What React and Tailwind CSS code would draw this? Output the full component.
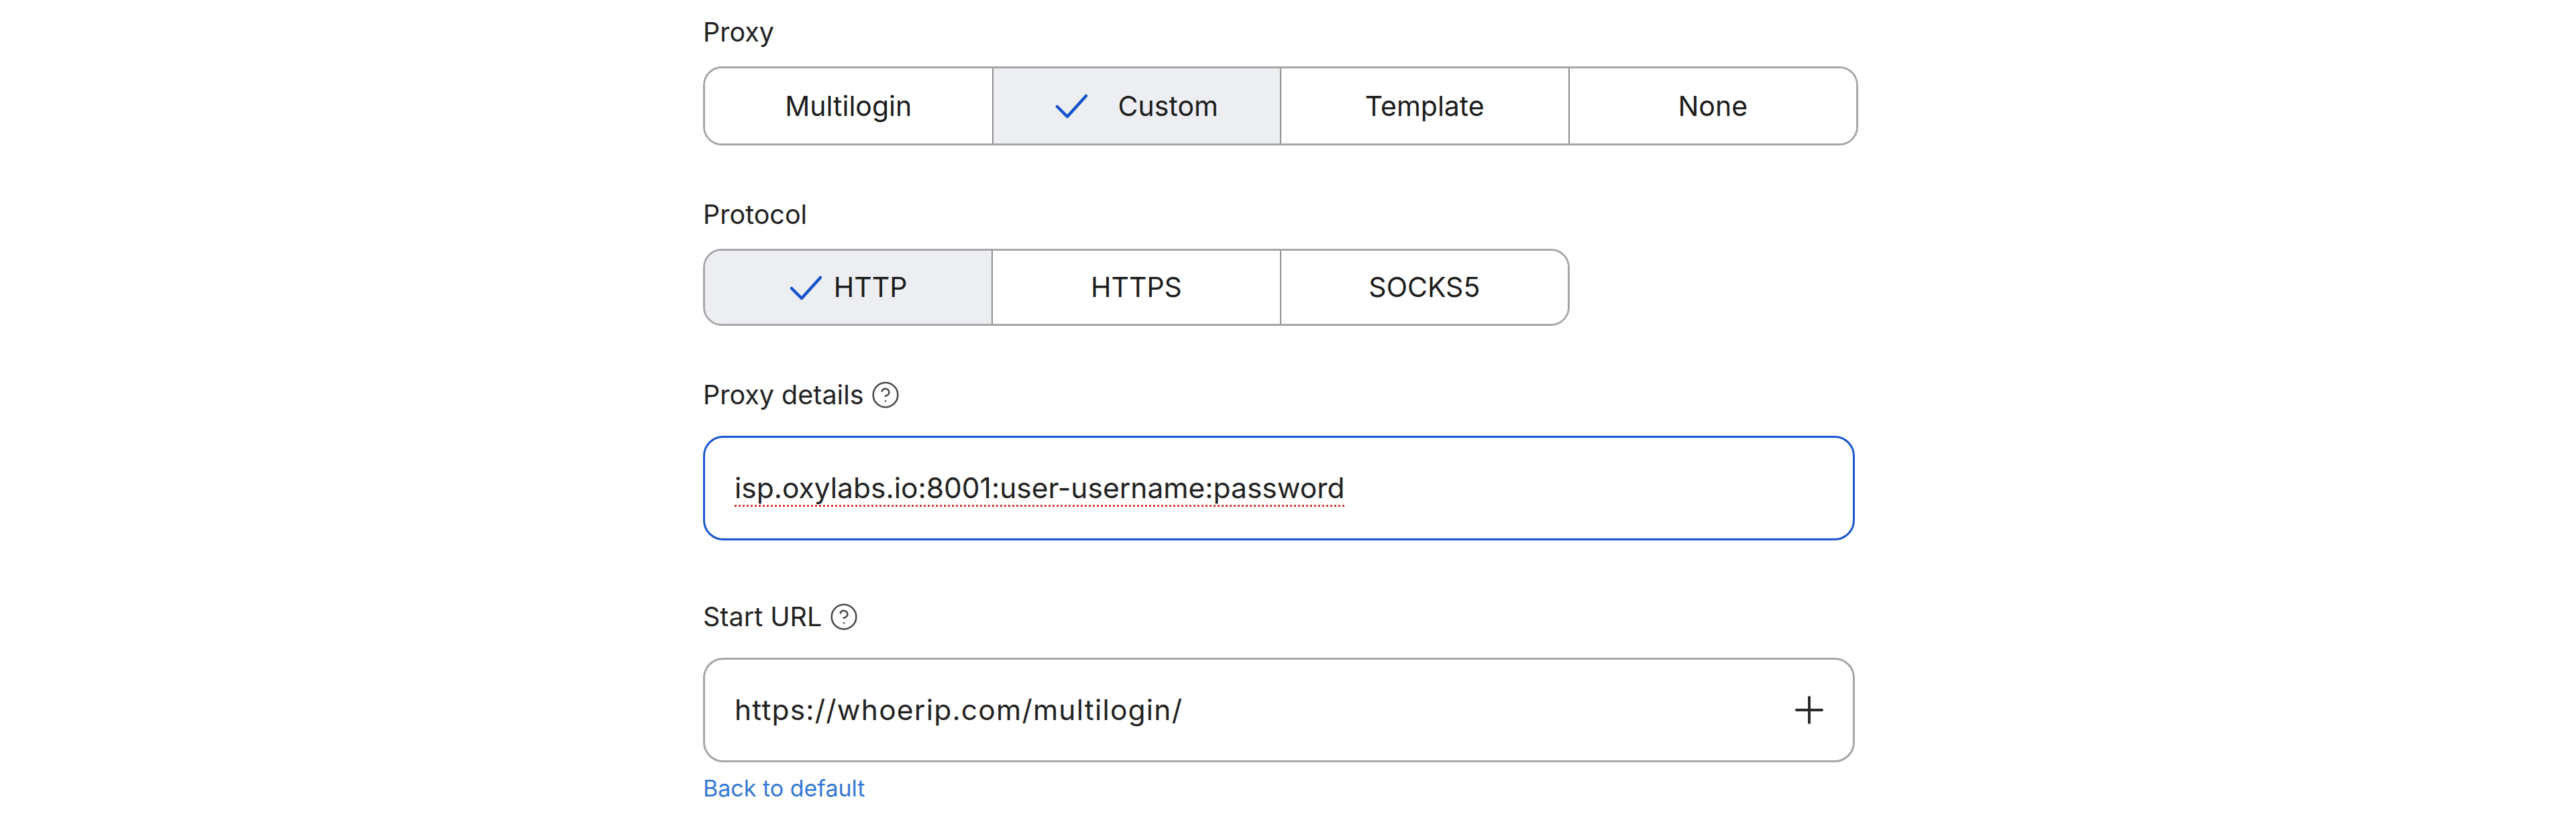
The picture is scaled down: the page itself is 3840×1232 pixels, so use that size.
import React from "react";

function Check() {
  return (
    <svg width="48" height="38" viewBox="0 0 48 38" fill="none" className="shrink-0">
      <path d="M3 20 L18 35 L46 4" stroke="#1652cc" strokeWidth="4.5" strokeLinecap="round" strokeLinejoin="round" />
    </svg>
  );
}

function Help() {
  return (
    <svg width="44" height="44" viewBox="0 0 24 24" fill="none" stroke="#4a4a4a" strokeWidth="1.4" strokeLinecap="round" strokeLinejoin="round" className="shrink-0">
      <circle cx="12" cy="12" r="10" />
      <path d="M9.09 9a3 3 0 0 1 5.83 1c0 2-3 3-3 3" />
      <path d="M12 17h.01" />
    </svg>
  );
}

function Plus() {
  return (
    <svg width="42" height="42" viewBox="0 0 42 42" fill="none" className="shrink-0">
      <path d="M21 2 V40 M2 21 H40" stroke="#2a2a2a" strokeWidth="4" strokeLinecap="round" />
    </svg>
  );
}

function Segmented({ items, width }) {
  return (
    <div className={`flex overflow-hidden rounded-[28px] border-[3px] border-[#a6a6a6] ${width}`}>
      {items.map((it, i) => (
        <div
          key={it.label}
          className={`flex flex-1 items-center justify-center ${it.gap} ${i > 0 ? "border-l-2 border-[#8e8e8e]" : ""} ${it.selected ? "bg-[#eceef2]" : "bg-white"}`}
        >
          {it.selected && <Check />}
          <span className="text-[41px] leading-none text-[#1c1c1c]">{it.label}</span>
        </div>
      ))}
    </div>
  );
}

function Label({ children, help }) {
  return (
    <div className="flex h-[46px] items-center">
      <span className="text-[39.5px] leading-[46px] text-[#222]">{children}</span>
      {help && <span className={`flex items-center ${help}`}><Help /></span>}
    </div>
  );
}

export default function App() {
  return (
    <div className="min-h-[1232px] w-full bg-white pl-[1048px] pt-[25px]" style={{ fontFamily: "Inter, 'Noto Sans', sans-serif" }}>
      <Label>Proxy</Label>
      <div className="mt-[28px]">
        <Segmented
          width="h-[118px] w-[1722px]"
          items={[
            { label: "Multilogin", gap: "" },
            { label: "Custom", selected: true, gap: "gap-[46px]" },
            { label: "Template", gap: "" },
            { label: "None", gap: "" },
          ]}
        />
      </div>

      <div className="mt-[80px]">
        <Label>Protocol</Label>
      </div>
      <div className="mt-[28px]">
        <Segmented
          width="h-[115px] w-[1292px]"
          items={[
            { label: "HTTP", selected: true, gap: "gap-[18px]" },
            { label: "HTTPS", gap: "" },
            { label: "SOCKS5", gap: "" },
          ]}
        />
      </div>

      <div className="mt-[80px]">
        <Label help="ml-[10px]">Proxy details</Label>
      </div>
      <div className="mt-[38px] flex h-[156px] w-[1717px] items-center rounded-[30px] border-[3px] border-[#1a56d0] bg-white pl-[44px]">
        <span className="text-[42.5px] leading-none text-[#222] underline decoration-[#e0342f] decoration-dotted decoration-[3px] underline-offset-[10px]">
          isp.oxylabs.io:8001:user-username:password
        </span>
      </div>

      <div className="mt-[91px]">
        <Label help="ml-[11px]">Start URL</Label>
      </div>
      <div className="mt-[38px] flex h-[156px] w-[1717px] items-center justify-between rounded-[30px] border-[3px] border-[#a6a6a6] bg-white pl-[44px] pr-[44px]">
        <span className="text-[42.5px] leading-none tracking-[1.2px] text-[#222]">https://whoerip.com/multilogin/</span>
        <Plus />
      </div>

      <div className="mt-[19px]">
        <span className="text-[34px] leading-[40px] text-[#3478d4]">Back to default</span>
      </div>
    </div>
  );
}
